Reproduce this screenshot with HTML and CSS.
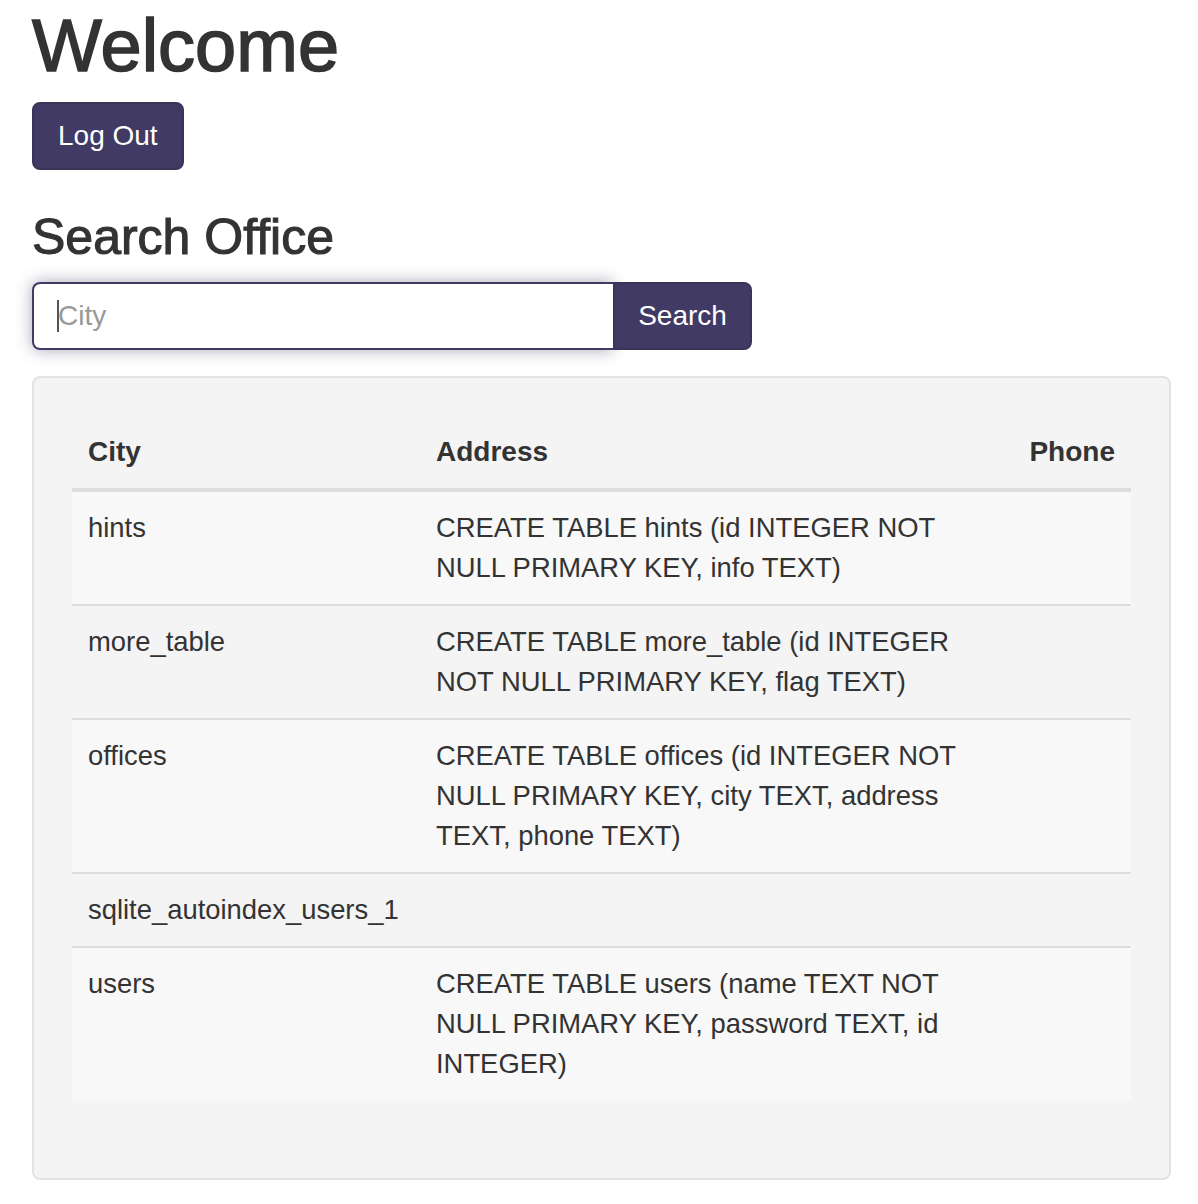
FILE: index.html
```html
<!DOCTYPE html>
<html lang="en">
<head>
<meta charset="utf-8">
<title>Welcome</title>
<link rel="stylesheet" href="styles.css">
</head>
<body>
<div class="container">
  <h1 class="title">Welcome</h1>
  <button class="btn" type="button">Log Out</button>
  <h2 class="subtitle">Search Office</h2>
  <form class="input-group" onsubmit="return false">
    <span class="caret"></span>
    <input class="form-control" type="text" placeholder="City">
    <button class="btn btn-addon" type="submit">Search</button>
  </form>
  <div class="well">
    <table class="table">
      <colgroup>
        <col class="col-city">
        <col class="col-address">
        <col class="col-phone">
      </colgroup>
      <thead>
        <tr><th>City</th><th>Address</th><th class="right">Phone</th></tr>
      </thead>
      <tbody>
        <tr><td>hints</td><td><div class="wrap">CREATE TABLE hints (id INTEGER NOT NULL PRIMARY KEY, info TEXT)</div></td><td></td></tr>
        <tr><td>more_table</td><td><div class="wrap">CREATE TABLE more_table (id INTEGER NOT NULL PRIMARY KEY, flag TEXT)</div></td><td></td></tr>
        <tr><td>offices</td><td><div class="wrap">CREATE TABLE offices (id INTEGER NOT NULL PRIMARY KEY, city TEXT, address TEXT, phone TEXT)</div></td><td></td></tr>
        <tr><td>sqlite_autoindex_users_1</td><td></td><td></td></tr>
        <tr><td>users</td><td><div class="wrap">CREATE TABLE users (name TEXT NOT NULL PRIMARY KEY, password TEXT, id INTEGER)</div></td><td></td></tr>
      </tbody>
    </table>
  </div>
</div>
</body>
</html>
```
FILE: styles.css
```css
* { box-sizing: border-box; }
html, body {
  margin: 0;
  padding: 0;
  background: #fff;
}
body {
  font-family: "Liberation Sans", Arial, Helvetica, sans-serif;
  font-size: 28px;
  line-height: 40px;
  color: #333;
}
.container {
  padding: 0 27px 0 32px;
}
.title {
  margin: 5px 0 0;
  font-size: 74px;
  line-height: 81px;
  font-weight: 400;
  -webkit-text-stroke: 1.6px #333;
  letter-spacing: 0;
}
.btn {
  display: inline-block;
  font-family: inherit;
  font-size: 28px;
  line-height: 40px;
  color: #fff;
  background: #413a64;
  border: 2px solid #3a3459;
  border-radius: 8px;
  padding: 12px 24px;
  margin-top: 16px;
  cursor: pointer;
}
.subtitle {
  margin: 40px 0 0;
  font-size: 50px;
  line-height: 55px;
  font-weight: 400;
  -webkit-text-stroke: 1.1px #333;
}
.input-group {
  position: relative;
  display: flex;
  width: 720px;
  margin: 17px 0 0;
}
.form-control {
  flex: 0 0 581px;
  height: 68px;
  padding: 12px 24px;
  font-family: inherit;
  font-size: 28px;
  color: #555;
  background: #fff;
  border: 2px solid #413a64;
  border-right: none;
  border-radius: 8px 0 0 8px;
  box-shadow: 0 0 16px rgba(65, 58, 100, 0.45);
  outline: none;
}
.form-control::placeholder {
  color: #999;
}
.caret {
  position: absolute;
  left: 25px;
  top: 18px;
  width: 2px;
  height: 32px;
  background: #555;
  z-index: 2;
}
.btn-addon {
  flex: 1 1 auto;
  margin: 0;
  height: 68px;
  border-radius: 0 8px 8px 0;
  padding: 12px 22px;
}
.well {
  margin-top: 26px;
  background: #f4f4f4;
  border: 2px solid #e3e3e3;
  border-radius: 8px;
  padding: 38px;
}
.table {
  width: 100%;
  table-layout: fixed;
  border-collapse: collapse;
  margin-bottom: 40px;
}
.col-city { width: 348px; }
.col-address { width: 580px; }
.col-phone { width: auto; }
.table th {
  text-align: left;
  font-weight: 700;
  padding: 16px;
  vertical-align: bottom;
  border-bottom: 4px solid #ddd;
}
.table th.right { text-align: right; }
.table td {
  font-size: 27.4px;
  padding: 16px;
  vertical-align: top;
  border-top: 2px solid #ddd;
}
.table tbody tr:first-child td { border-top: none; }
.table tbody tr:nth-child(odd) { background: #f8f8f8; }
.wrap {
  width: 540px;
}
```
